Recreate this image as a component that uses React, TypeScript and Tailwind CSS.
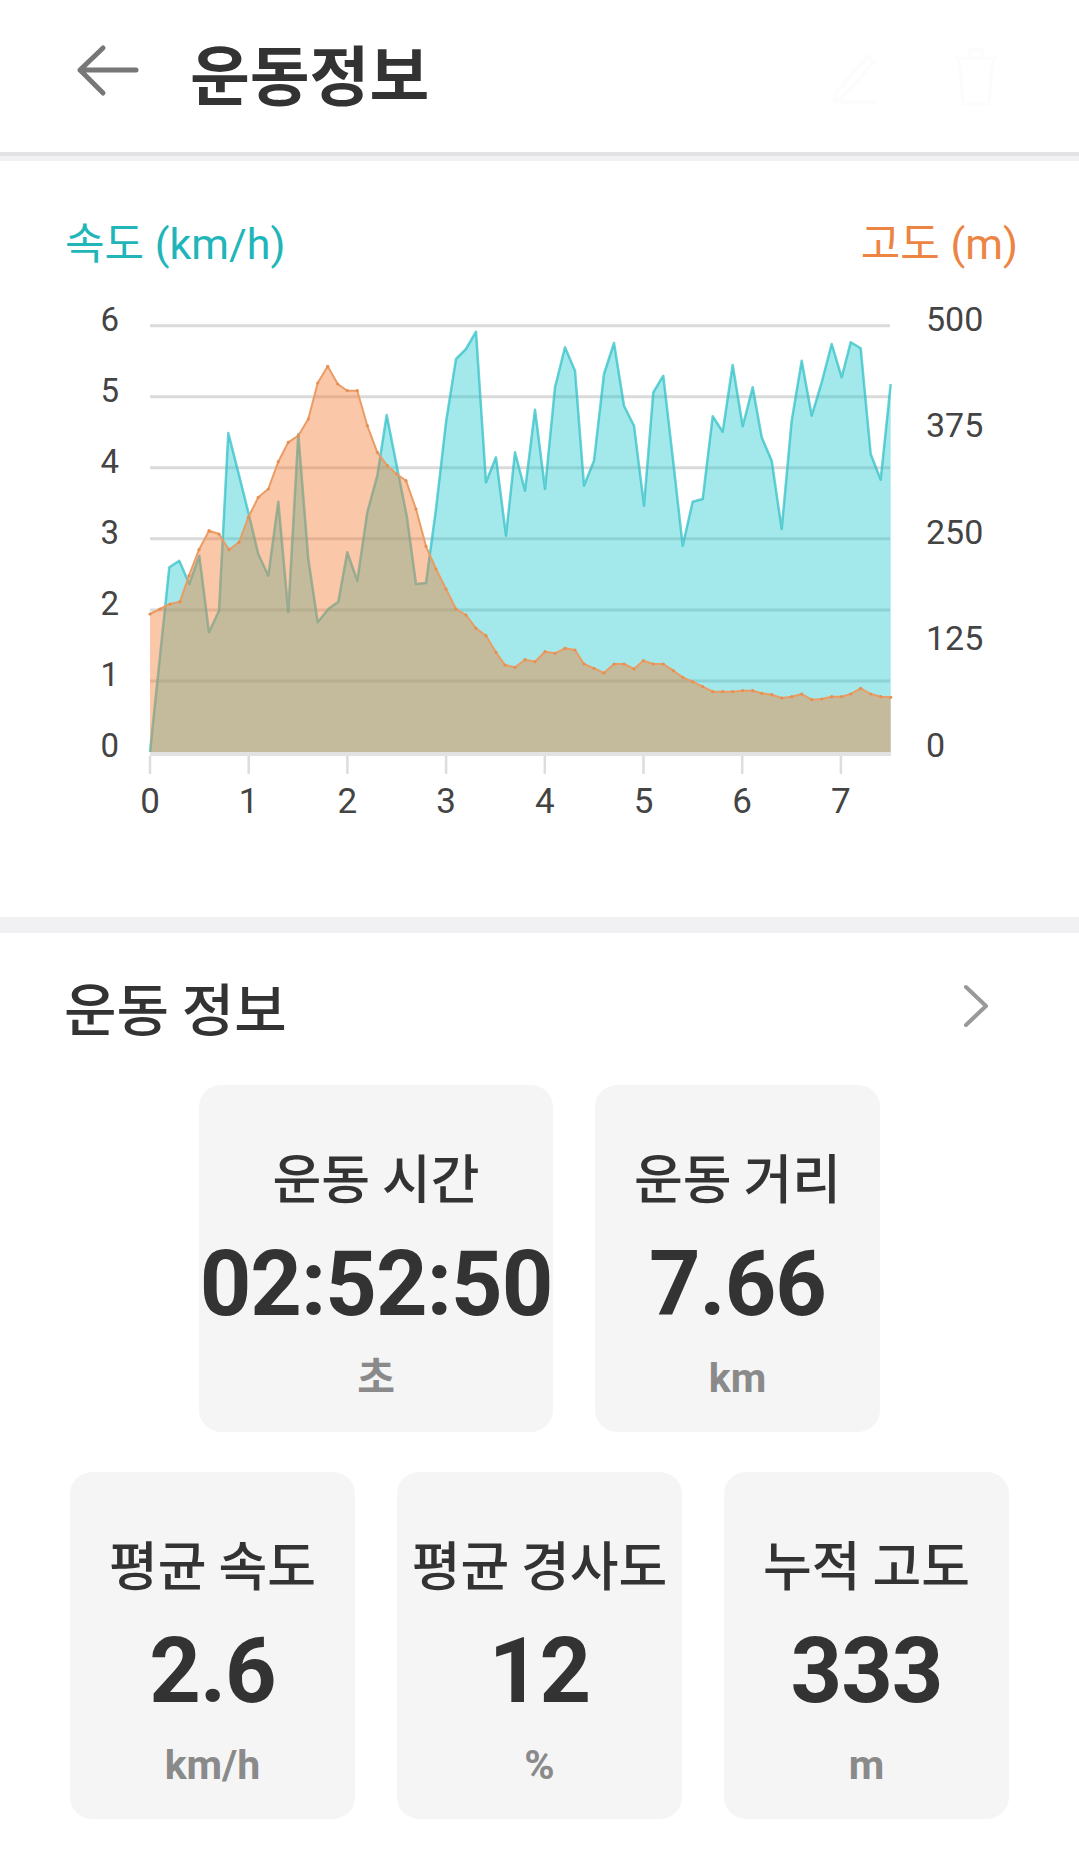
import React from "react";

const KR = { fontFamily: '"Noto Sans CJK KR", "Noto Sans", sans-serif' };
const NUM = { fontFamily: 'Roboto, "Noto Sans CJK KR", sans-serif' };

const BASE = 753;

// 속도 (km/h) points, in page pixels
const speed: [number, number][] = [
  [150, 753], [169.3, 568.3], [179.3, 561.7], [189.3, 585], [199.3, 556.7], [209, 633.3],
  [219, 611.7], [228.3, 434], [238.3, 473.3], [248.3, 513.3], [258.3, 555], [268.3, 576.7],
  [278.3, 502.7], [288.3, 613.3], [298.3, 435], [308.3, 560], [317.7, 623.3], [328.3, 610],
  [338.3, 602.7], [347.3, 553.3], [357.3, 581.7], [367.3, 513.3], [377.3, 476.7], [386.7, 416],
  [396.7, 466.7], [406.7, 516.7], [416, 585], [426, 584], [436, 510], [446, 423.3], [456, 360],
  [466, 350], [476, 332.7], [486, 483.3], [496, 458.3], [506, 536.7], [515, 453.3], [525, 491.7],
  [535, 410.7], [545, 490], [555, 388.3], [565, 348.3], [575, 371.7], [584, 486.7], [594, 461.7],
  [604, 375], [614, 344], [624, 406.7], [634, 426.7], [644, 506.7], [653.3, 393.3], [663.3, 376.7],
  [673.3, 463.3], [682.7, 546.7], [692.7, 502.7], [702.7, 500], [712.7, 417.3], [722.7, 432.7],
  [732.7, 366], [742.7, 427.3], [752.7, 388.3], [761.7, 438.3], [771.7, 461.7], [781.7, 530],
  [791.7, 421.7], [801.7, 361.7], [811.7, 416.7], [821.7, 383.3], [831.7, 345], [841.7, 378.3],
  [850.7, 343.3], [860.7, 349.3], [870.7, 455], [880.7, 480.7], [890.7, 385],
];

// 고도 (m) points, in page pixels
const alt: [number, number][] = [
  [150, 615], [160, 610], [170, 605], [180, 602.7], [189, 576.7], [199, 550.7], [209, 531.7],
  [219, 535], [229, 550.7], [239, 543.3], [248.3, 518.3], [258.3, 498.3], [268.3, 490],
  [278.3, 462.7], [288.3, 443.3], [298.3, 436.7], [308.3, 420], [317.7, 384], [327.7, 367.3],
  [337.7, 385], [347.3, 391.7], [357.3, 391.7], [367.3, 426.7], [377.3, 453.3], [387.3, 466.7],
  [396.7, 475], [406, 481.7], [416, 510], [426, 547.3], [436, 570], [446, 590], [456, 610],
  [466, 616], [476, 629.3], [486, 636.7], [496, 653.3], [505, 666], [515, 668.3], [525, 660.7],
  [535, 662.7], [545, 652.7], [555, 654.3], [565, 649.3], [575, 651], [584, 665], [594, 669.3],
  [604, 674], [614, 665], [624, 665], [634, 670], [643.3, 661.7], [653.3, 665], [663.3, 665],
  [673.3, 671.7], [682.7, 678.3], [692.7, 682.7], [702.7, 687.7], [712.7, 692.7], [722.7, 692.7],
  [732.7, 692.7], [742.7, 691.7], [752.7, 691.7], [761.7, 694.3], [771.7, 695.7], [781.7, 699],
  [791.7, 697.7], [801.7, 695], [811.7, 700.7], [821.7, 700], [831.7, 697.7], [841.7, 697.7],
  [850.7, 695], [860.7, 689.3], [870.7, 695], [880.7, 697.7], [890.7, 698.3],
];

const line = (pts: [number, number][]) => pts.map(([x, y], i) => `${i ? "L" : "M"}${x} ${y}`).join(" ");
const area = (pts: [number, number][]) =>
  `${line(pts)} L${pts[pts.length - 1][0]} ${BASE} L${pts[0][0]} ${BASE} Z`;

function Chart() {
  const grid = [1, 2, 3, 4, 5, 6].map((k) => BASE - k * 71.05);
  const ticks = [0, 1, 2, 3, 4, 5, 6, 7];
  return (
    <svg width="1079" height="600" viewBox="0 268 1079 600" className="block" style={NUM}>
      {grid.map((y) => (
        <line key={y} x1="150" x2="890" y1={y} y2={y} stroke="#dadada" strokeWidth="3" />
      ))}
      <path d={area(speed)} fill="rgba(25,200,205,0.4)" />
      <path d={line(speed)} fill="none" stroke="rgba(40,190,196,0.7)" strokeWidth="2.5" strokeLinejoin="round" />
      <path d={area(alt)} fill="rgba(242,125,50,0.42)" />
      <path d={line(alt)} fill="none" stroke="#eb9c64" strokeWidth="2" strokeLinejoin="round" />
      {alt.map(([x, y]) => (
        <circle key={x} cx={x} cy={y} r="1.6" fill="#e59053" />
      ))}
      <rect x="150" y="753" width="741" height="4" fill="#e2e2e2" />
      {ticks.map((i) => (
        <line key={i} x1={150 + i * 98.7} x2={150 + i * 98.7} y1="757" y2="775" stroke="#dddddd" strokeWidth="2.5" />
      ))}
      {[0, 1, 2, 3, 4, 5, 6].map((k) => (
        <text key={k} x="119" y={BASE - k * 71.05 + 5} textAnchor="end" fontSize="33" fill="#444">
          {k}
        </text>
      ))}
      {[0, 125, 250, 375, 500].map((v, k) => (
        <text key={v} x="926" y={BASE - k * 106.6 + 5} fontSize="34" fill="#444">
          {v}
        </text>
      ))}
      {ticks.map((i) => (
        <text key={i} x={150 + i * 98.7} y="814" textAnchor="middle" fontSize="35" fill="#444">
          {i}
        </text>
      ))}
    </svg>
  );
}

function StatCard({ label, value, unit, wide }: { label: string; value: string; unit: string; wide?: boolean }) {
  return (
    <div className={`${wide ? "w-[354px]" : "w-[285px]"} h-[347px] rounded-[22px] bg-[#f5f5f5] flex flex-col items-center pt-[65px]`}>
      <div className="text-[53px] leading-none font-medium text-[#333] whitespace-nowrap" style={KR}>
        {label}
      </div>
      <div className="mt-[37px] text-[90px] leading-none font-bold text-[#333] tracking-[-1px] whitespace-nowrap" style={NUM}>
        {value}
      </div>
      <div className="mt-[28px] text-[41px] leading-none font-bold text-[#8a8a8a]" style={NUM}>
        {unit}
      </div>
    </div>
  );
}

export default function App() {
  return (
    <div className="w-[1079px] min-h-[1852px] bg-white overflow-hidden">
      {/* header */}
      <div className="h-[152px] flex items-center pl-[76px]">
        <svg width="64" height="64" viewBox="0 0 64 64" className="shrink-0">
          <path d="M4 26 L60 26 M27 4 L4 26 L27 49" fill="none" stroke="#777" strokeWidth="5" strokeLinecap="round" strokeLinejoin="round" />
        </svg>
        <div className="ml-[50px] mb-[8px] text-[65px] leading-none font-bold text-[#333]" style={KR}>
          운동정보
        </div>
        <div className="ml-auto mr-[80px] flex items-center gap-[75px]">
          <svg width="48" height="56" viewBox="0 0 48 56" fill="none" stroke="#fcfcfc" strokeWidth="3">
            <path d="M6 44 L38 8 L44 14 L12 50 L4 52 Z" />
            <path d="M4 54 L47 54" />
          </svg>
          <svg width="46" height="60" viewBox="0 0 46 60" fill="none" stroke="#fcfcfc" strokeWidth="3">
            <path d="M2 12 L44 12 M17 12 L17 4 L29 4 L29 12 M6 12 L10 58 L36 58 L40 12" />
          </svg>
        </div>
      </div>
      <div className="h-[4px] bg-[#e2e2e2]" />
      <div className="h-[5px] bg-[#f1f1f3]" />

      {/* chart */}
      <div className="h-[756px] flex flex-col">
        <div className="mt-[58px] flex justify-between pl-[65px] pr-[61px] text-[43px] leading-[50px]" style={NUM}>
          <span className="text-[#1fb5b9]">속도 (km/h)</span>
          <span className="text-[#ec8544]">고도 (m)</span>
        </div>
        <div className="-mt-[2px]">
          <Chart />
        </div>
      </div>
      <div className="h-[16px] bg-[#f1f1f3]" />

      {/* 운동 정보 */}
      <div className="pt-[41px]">
        <div className="flex items-center justify-between pl-[64px] pr-[88px]">
          <div className="text-[57px] leading-[64px] font-medium text-[#333]" style={KR}>
            운동 정보
          </div>
          <svg width="30" height="44" viewBox="0 0 30 44" fill="none">
            <path d="M5 3 L25 22 L5 41" stroke="#999" strokeWidth="4" strokeLinecap="round" strokeLinejoin="round" />
          </svg>
        </div>
        <div className="mt-[47px] flex justify-center gap-[42px]">
          <StatCard label="운동 시간" value="02:52:50" unit="초" wide />
          <StatCard label="운동 거리" value="7.66" unit="km" />
        </div>
        <div className="mt-[40px] flex justify-center gap-[42px]">
          <StatCard label="평균 속도" value="2.6" unit="km/h" />
          <StatCard label="평균 경사도" value="12" unit="%" />
          <StatCard label="누적 고도" value="333" unit="m" />
        </div>
      </div>
    </div>
  );
}
